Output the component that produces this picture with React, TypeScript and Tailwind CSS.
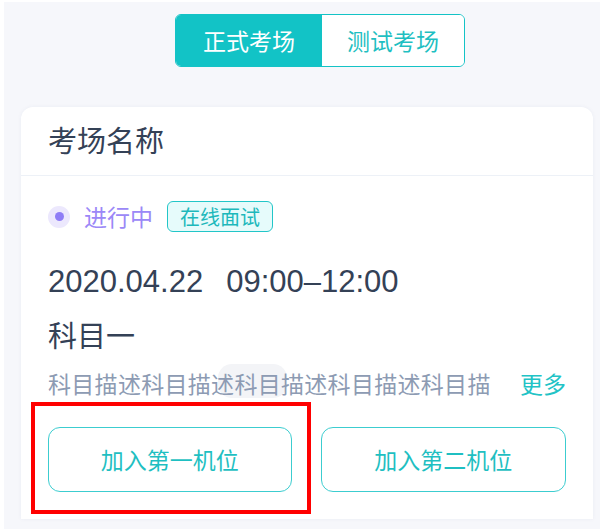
import React from "react";

const cjk = "font-['Noto_Sans_CJK_SC',sans-serif]";

const App: React.FC = () => {
  return (
    <div
      className={`w-[600px] h-[529px] overflow-hidden bg-[#f6f7fb] border-l-[4px] border-t-[2px] border-white ${cjk}`}
    >
      {/* tabs */}
      <div className="flex pl-[171px] pt-[12px]">
        <div className="flex h-[53px] rounded-[6px] border-[1.5px] border-[#14c3c6] overflow-hidden">
          <div className="w-[146px] flex items-center justify-center bg-[#12c3c6] text-white text-[23px] leading-none">
            正式考场
          </div>
          <div className="w-[142px] flex items-center justify-center bg-white text-[#1fbfc2] text-[23px] leading-none">
            测试考场
          </div>
        </div>
      </div>

      {/* card */}
      <div className="ml-[17px] mt-[40px] w-[572px] bg-white rounded-t-[12px] shadow-[0_0_4px_rgba(40,60,120,0.05)]">
        <div className="h-[69px] px-[27px] pb-[3px] flex items-center border-b-[1.5px] border-[#edf1f7] text-[29px] text-[#344156]">
          考场名称
        </div>

        <div className="px-[27px] pt-[25px] pb-[27px]">
          <div className="flex items-center h-[31px]">
            <div className="w-[22px] h-[22px] rounded-full bg-[#ece8fd] flex items-center justify-center">
              <div className="w-[9px] h-[9px] rounded-full bg-[#8f7df6]" />
            </div>
            <span className="ml-[14px] text-[23px] leading-none text-[#9b88f7]">进行中</span>
            <span className="ml-[14px] w-[106px] h-[31px] flex items-center justify-center rounded-[6px] border-[1.5px] border-[#22c6c8] bg-[#e6fbfb] text-[20px] leading-none text-[#1db8bb]">
              在线面试
            </span>
          </div>

          <div className="mt-[32px] h-[36px] leading-[36px] text-[31px] text-[#344156] font-['Liberation_Sans',sans-serif]">
            <span>2020.04.22</span>
            <span className="ml-[23px]">09:00–12:00</span>
          </div>

          <div className="mt-[16px] h-[36px] leading-[36px] text-[29px] text-[#344156]">科目一</div>

          <div className="relative mt-[15px] h-[32px] flex items-center justify-between">
            <span className="absolute left-[170px] top-[-3px] w-[69px] h-[34px] rounded-[14px] bg-[#f3f4f7]" />
            <span className="relative text-[23px] leading-[32px] tracking-[0.3px] text-[#8d9bb3]">
              科目描述科目描述科目描述科目描述科目描
            </span>
            <span className="relative text-[23px] leading-[32px] text-[#22c3c6]">更多</span>
          </div>

          <div className="mt-[28px] flex gap-[29px]">
            <div className="relative flex-1">
              <div className="h-[65px] flex items-center justify-center rounded-[12px] border-[1.5px] border-[#3ccdd0] text-[23px] text-[#1fbfc2]">
                加入第一机位
              </div>
              <div className="absolute left-[-17px] right-[-19px] top-[-25px] bottom-[-22px] border-[4px] border-[#ff0000] pointer-events-none" />
            </div>
            <div className="flex-1 h-[65px] flex items-center justify-center rounded-[12px] border-[1.5px] border-[#3ccdd0] text-[23px] text-[#1fbfc2]">
              加入第二机位
            </div>
          </div>
        </div>
      </div>
    </div>
  );
};

export default App;
